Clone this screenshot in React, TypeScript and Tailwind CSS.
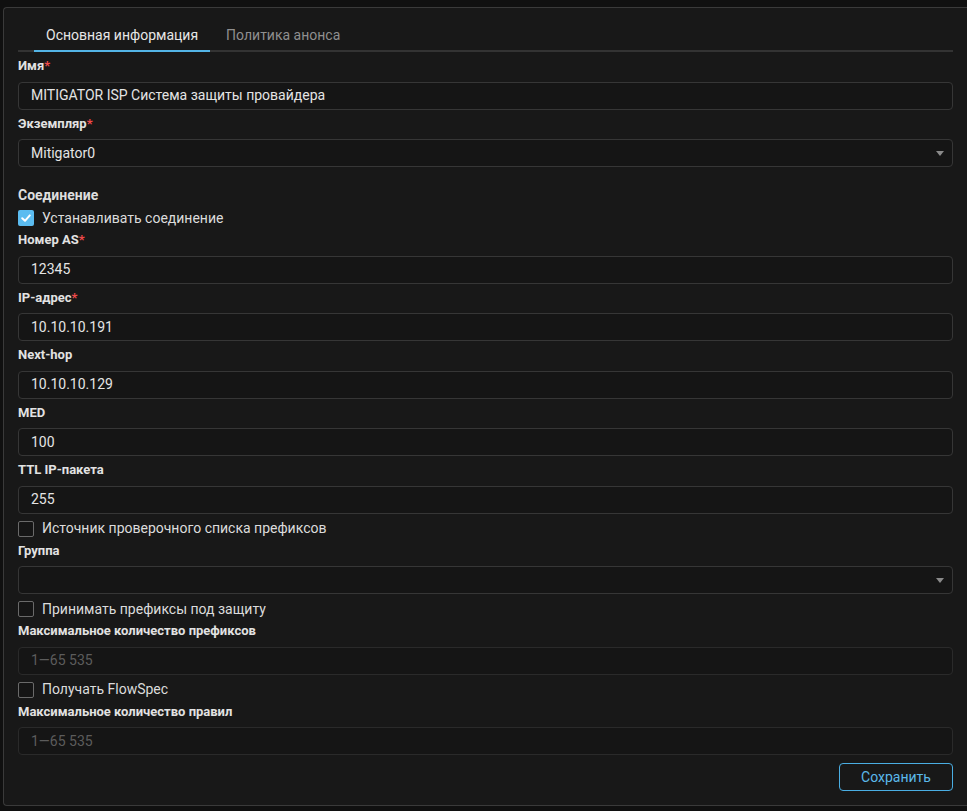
import React from 'react';

const font = { fontFamily: 'Roboto, "Noto Sans", sans-serif' };

function Label({ text, required }: { text: string; required?: boolean }) {
  return (
    <div className="mt-1 mb-[5.5px] h-5 flex items-center text-[13px] font-bold text-[#e2e2e2]">
      {text}
      {required && <span className="text-[#f04a4a]">*</span>}
    </div>
  );
}

function Input({ value, placeholder, disabled }: { value?: string; placeholder?: string; disabled?: boolean }) {
  return (
    <div
      className={`h-[28px] flex items-center px-3 rounded-[4px] border text-[14px] ${
        disabled ? 'border-[#2a2a2a] text-[#5c5c5c]' : 'border-[#363636] text-[#e4e4e4]'
      } bg-[#151515]`}
    >
      {value ?? placeholder}
    </div>
  );
}

function Select({ value }: { value?: string }) {
  return (
    <div className="h-[28px] flex items-center justify-between pl-3 pr-[8px] rounded-[4px] border border-[#363636] bg-[#151515] text-[14px] text-[#e4e4e4]">
      <span>{value}</span>
      <svg width="8" height="5" viewBox="0 0 8 5" className="mt-[1px]">
        <path d="M0 0 H8 L4 5 Z" fill="#8a8a8a" />
      </svg>
    </div>
  );
}

function Check({ label, checked }: { label: string; checked?: boolean }) {
  return (
    <div className="mt-[5px] -mb-[2px] h-5 flex items-center gap-[8px] text-[14px] text-[#dcdcdc]">
      {checked ? (
        <span className="w-4 h-4 rounded-[2px] bg-[#5bbcf0] flex items-center justify-center">
          <svg width="12" height="12" viewBox="0 0 12 12">
            <path d="M2.2 6.2 L5 8.8 L9.8 3.4" stroke="#fff" strokeWidth="2" fill="none" strokeLinecap="round" strokeLinejoin="round" />
          </svg>
        </span>
      ) : (
        <span className="w-4 h-4 rounded-[2px] border border-[#6a6a6a] bg-[#151515]" />
      )}
      <span>{label}</span>
    </div>
  );
}

export default function App() {
  return (
    <div className="min-h-[811px] bg-[#101010] pl-[3px] pt-[7px] pb-[4px]" style={font}>
      <div className="border-l border-t border-b border-[#3a3a3a] rounded-tl-[4px] rounded-bl-[4px] bg-[#181818] pl-[14px] pr-[14px] pt-[12px] pb-[14px]">
        <div className="flex border-b-2 border-[#333] pl-4">
          <div className="h-[30px] -mb-[2px] box-content px-[12px] border-b-2 border-[#53b4e6] flex items-center text-[14px] text-[#e6e6e6]">
            Основная информация
          </div>
          <div className="h-[30px] px-4 flex items-center text-[14px] text-[#8f8f8f]">Политика анонса</div>
        </div>

        <Label text="Имя" required />
        <Input value="MITIGATOR ISP Система защиты провайдера" />
        <Label text="Экземпляр" required />
        <Select value="Mitigator0" />

        <div className="mt-[18px] -mb-[2px] h-5 flex items-center text-[14px] font-bold text-[#dedede]">Соединение</div>
        <Check label="Устанавливать соединение" checked />
        <Label text="Номер AS" required />
        <Input value="12345" />
        <Label text="IP-адрес" required />
        <Input value="10.10.10.191" />
        <Label text="Next-hop" />
        <Input value="10.10.10.129" />
        <Label text="MED" />
        <Input value="100" />
        <Label text="TTL IP-пакета" />
        <Input value="255" />
        <Check label="Источник проверочного списка префиксов" />
        <Label text="Группа" />
        <Select />
        <Check label="Принимать префиксы под защиту" />
        <Label text="Максимальное количество префиксов" />
        <Input placeholder="1—65 535" disabled />
        <Check label="Получать FlowSpec" />
        <Label text="Максимальное количество правил" />
        <Input placeholder="1—65 535" disabled />

        <div className="flex justify-end mt-2">
          <button className="h-[28px] w-[114px] rounded-[4px] border border-[#4aaee3] text-[14px] text-[#5bb8ea] bg-transparent">
            Сохранить
          </button>
        </div>
      </div>
    </div>
  );
}
